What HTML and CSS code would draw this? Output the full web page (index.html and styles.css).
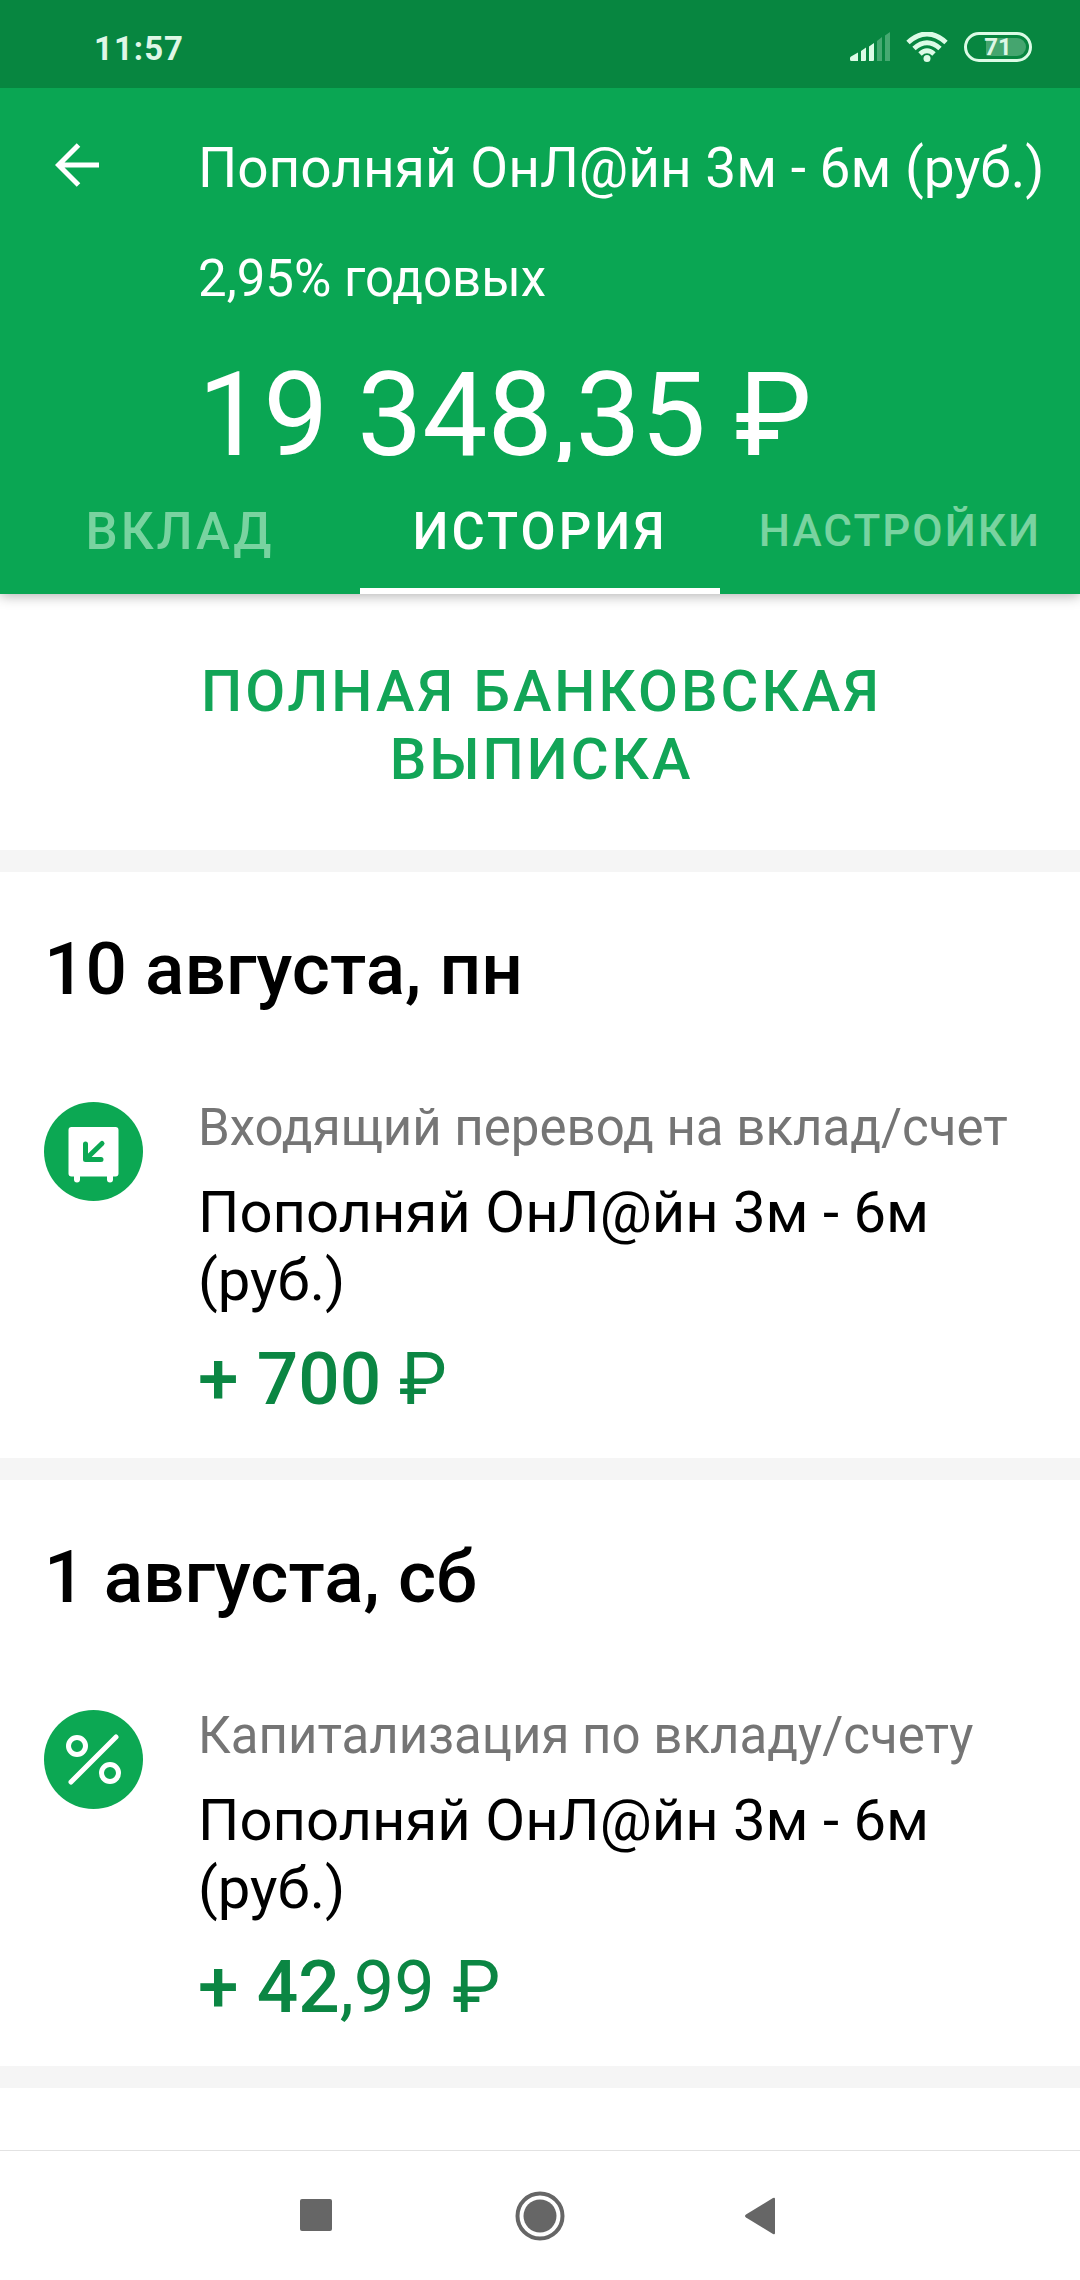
FILE: index.html
```html
<!DOCTYPE html>
<html lang="ru">
<head>
<meta charset="utf-8">
<meta name="viewport" content="width=device-width, initial-scale=1">
<title>История вклада</title>
<link rel="stylesheet" href="styles.css">
</head>
<body>
<div class="screen">
  <div class="status">
    <time class="clock">11:57</time>
    <div class="indicators">
      <svg class="signal" viewBox="0 0 40 30" aria-hidden="true">
        <path d="M1 24.500l7-4V29H1.500Q0 29 0 27.500V26Q0 25 1 24.500zM11 19l5-3.500V28q0 1-1 1h-4zM19 14.500l5-3.500V28q0 1-1 1h-4z"/>
        <path class="faint" d="M27 9l5-4v24h-5zM35 3.500l5-3.500v29h-5z"/>
      </svg>
      <svg class="wifi" viewBox="0 0 42 30" aria-hidden="true">
        <path d="M2 10.500Q21-6.500 40 10.500M8 16.500Q21 5 34 16.500M14 22Q21 15.500 28 22"/>
        <circle cx="21" cy="26.500" r="3.500"/>
      </svg>
      <div class="battery"><span class="charge"></span><span class="percent">71</span></div>
    </div>
  </div>

  <header class="header">
    <div class="summary">
      <button class="back" type="button" aria-label="Назад">
        <svg viewBox="0 0 44 44"><path d="M23.500 2L3.500 22l20 20M3.500 22H44"/></svg>
      </button>
      <div class="details">
        <h1 class="title">Пополняй ОнЛ@йн 3м - 6м (руб.)</h1>
        <p class="rate">2,95% годовых</p>
        <p class="balance">19 348,35 ₽</p>
      </div>
    </div>
    <nav class="tabs">
      <a class="tab" href="#deposit">ВКЛАД</a>
      <a class="tab active" href="#history" aria-current="page">ИСТОРИЯ</a>
      <a class="tab small" href="#settings">НАСТРОЙКИ</a>
    </nav>
  </header>

  <main class="content" id="history">
    <section class="statement">
      <button class="statement-button" type="button">ПОЛНАЯ БАНКОВСКАЯ ВЫПИСКА</button>
    </section>

    <section class="day">
      <h2 class="date">10 августа, пн</h2>
      <article class="operation">
        <svg class="icon" viewBox="0 0 99 99" aria-hidden="true">
          <circle class="disc" cx="49.500" cy="49.500" r="49.500"/>
          <path class="solid" d="M27.500 25h44q3 0 3 3v43.500q0 3-3 3H69v3a3 3 0 0 1-6 0v-3H36v3a3 3 0 0 1-6 0v-3h-2.500q-3 0-3-3V28q0-3 3-3z"/>
          <path class="arrow" d="M41.500 42v15.500H57M42.500 56.500L58 41.500"/>
        </svg>
        <div class="info">
          <p class="kind">Входящий перевод на вклад/счет</p>
          <p class="name">Пополняй ОнЛ@йн 3м - 6м (руб.)</p>
          <p class="amount"><strong>+ 700</strong> ₽</p>
        </div>
      </article>
    </section>

    <section class="day">
      <h2 class="date">1 августа, сб</h2>
      <article class="operation">
        <svg class="icon" viewBox="0 0 99 99" aria-hidden="true">
          <circle class="disc" cx="49.500" cy="49.500" r="49.500"/>
          <path class="line" d="M27 72L72 27"/>
          <circle class="line" cx="33" cy="36" r="8.500"/>
          <circle class="line" cx="66" cy="63" r="8.500"/>
        </svg>
        <div class="info">
          <p class="kind">Капитализация по вкладу/счету</p>
          <p class="name">Пополняй ОнЛ@йн 3м - 6м (руб.)</p>
          <p class="amount"><strong>+ 42</strong>,99 ₽</p>
        </div>
      </article>
    </section>
  </main>

  <footer class="system-nav">
    <button type="button" aria-label="Недавние приложения"><svg viewBox="0 0 50 50"><rect x="9" y="8" width="32" height="32" rx="2"/></svg></button>
    <button type="button" aria-label="Домой"><svg viewBox="0 0 50 50"><circle class="ring" cx="25" cy="25" r="22.500"/><circle cx="25" cy="25" r="16.500"/></svg></button>
    <button type="button" aria-label="Назад"><svg viewBox="0 0 50 50"><path d="M7 23.500L34 7q2-1 2 1v34q0 2-2 1L7 26.500q-2-1.500 0-3z"/></svg></button>
  </footer>
</div>
</body>
</html>
```
FILE: styles.css
```css
* {
  box-sizing: border-box;
}

body {
  margin: 0;
  background: #fff;
  color: #000;
  font-family: Roboto, "Liberation Sans", sans-serif;
}

h1, h2, p {
  margin: 0;
  font-weight: 400;
}

button {
  border: 0;
  padding: 0;
  background: none;
  color: inherit;
  font: inherit;
  cursor: pointer;
}

svg {
  display: block;
}

.screen {
  display: flex;
  flex-direction: column;
  min-height: 100vh;
}

/* Status bar */

.status {
  position: relative;
  z-index: 1;
  display: flex;
  justify-content: space-between;
  align-items: center;
  height: 88px;
  padding: 6px 48px 0 94px;
  background: #078640;
  color: #dff7e6;
}

.clock {
  padding-top: 2px;
  font-size: 33px;
  font-weight: 700;
  letter-spacing: 1px;
}

.indicators {
  display: flex;
  align-items: center;
  gap: 16px;
  fill: #dcfbe6;
}

.signal {
  width: 40px;
  height: 30px;
}

.faint {
  opacity: 0.3;
}

.wifi {
  width: 42px;
  height: 30px;
}

.wifi path {
  fill: none;
  stroke: #dcfbe6;
  stroke-width: 5;
}

.battery {
  display: grid;
  width: 68px;
  height: 30px;
  padding: 3px;
  border: 3px solid #dcfbe6;
  border-radius: 15px;
}

.charge,
.percent {
  grid-area: 1 / 1;
}

.charge {
  justify-self: end;
  width: 40px;
  border-radius: 2px 9px 9px 2px;
  background: #45a56f;
}

.percent {
  font-size: 24px;
  font-weight: 700;
  line-height: 18px;
  text-align: center;
}

/* Header */

.header {
  position: relative;
  background: #0aa653;
  color: #fff;
  box-shadow: 0 2px 12px rgba(0, 0, 0, 0.3);
}

.summary {
  display: flex;
  align-items: flex-start;
  padding-top: 48px;
}

.back {
  flex: none;
  width: 198px;
  height: 58px;
  padding-left: 55px;
}

.back svg {
  width: 44px;
  height: 44px;
  fill: none;
  stroke: #fff;
  stroke-width: 5;
}

.details {
  flex: 1;
}

.title {
  font-size: 55px;
  line-height: 64px;
  white-space: nowrap;
}

.rate {
  margin-top: 49px;
  font-size: 51px;
  line-height: 60px;
}

/* The box ends where the tab bar begins, trimming the comma's tail. */
.balance {
  height: 114px;
  margin-top: 39px;
  overflow: hidden;
  font-size: 116px;
  line-height: 134px;
  white-space: nowrap;
}

.tabs {
  display: grid;
  grid-template-columns: repeat(3, 1fr);
  height: 132px;
}

.tab {
  display: flex;
  justify-content: center;
  align-items: center;
  padding-top: 12px;
  border-bottom: 6px solid transparent;
  color: #79d3a0;
  font-size: 51px;
  font-weight: 500;
  letter-spacing: 3px;
  text-decoration: none;
}

.tab.active {
  border-color: #fff;
  color: #fff;
}

.tab.small {
  font-size: 44px;
  letter-spacing: 2px;
}

/* History */

.content {
  flex: 1;
}

.statement {
  padding: 63px 180px 57px;
  border-bottom: 22px solid #f5f5f5;
}

.statement-button {
  display: block;
  width: 100%;
  padding-left: 3px;
  color: #12a557;
  font-size: 58px;
  font-weight: 500;
  line-height: 68px;
  letter-spacing: 3px;
}

.day {
  padding: 55px 44px 36px;
  border-bottom: 22px solid #f5f5f5;
}

.date {
  font-size: 73px;
  font-weight: 500;
  line-height: 84px;
}

.operation {
  display: flex;
  gap: 55px;
  margin-top: 87px;
}

.icon {
  flex: none;
  width: 99px;
  height: 99px;
  margin-top: 4px;
  fill: none;
  stroke-linecap: round;
  stroke-linejoin: round;
}

.disc {
  fill: #0ca853;
}

.solid {
  fill: #fff;
}

.arrow {
  stroke: #0ca853;
  stroke-width: 5;
}

.line {
  stroke: #fff;
  stroke-width: 5;
}

.info {
  flex: 1;
}

.kind {
  color: #757575;
  font-size: 51px;
  line-height: 60px;
}

.name {
  margin-top: 20px;
  font-size: 58px;
  line-height: 68px;
}

.amount {
  margin-top: 24px;
  color: #0b8643;
  font-size: 72px;
  line-height: 84px;
}

.amount strong {
  font-size: 73px;
  font-weight: 500;
  line-height: 1;
}

/* System navigation */

.system-nav {
  display: flex;
  justify-content: center;
  align-items: center;
  gap: 174px;
  height: 130px;
  border-top: 1px solid #e2e2e2;
  background: #fff;
}

.system-nav svg {
  width: 50px;
  height: 50px;
  fill: #666;
}

.system-nav .ring {
  fill: none;
  stroke: #666;
  stroke-width: 4;
}
```
